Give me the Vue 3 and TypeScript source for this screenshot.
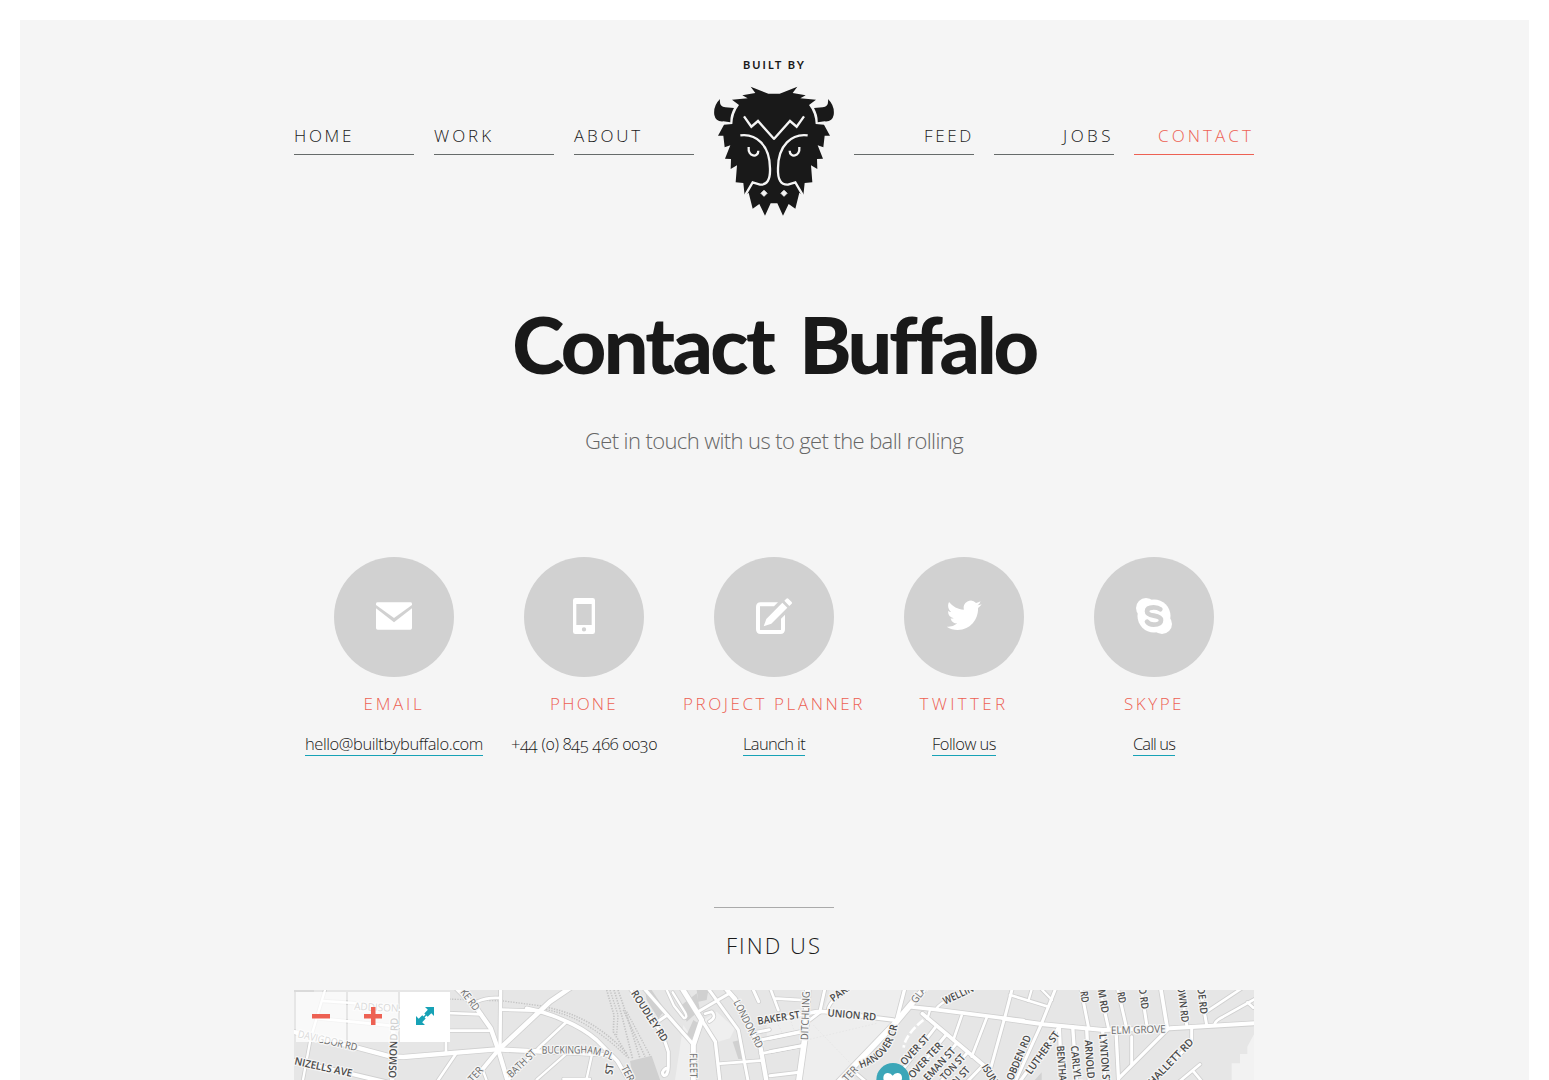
<script setup lang="ts">
import type { Directive } from 'vue'

interface NavItem { label: string; width: number; active?: boolean }
interface Contact { icon: string; title: string; titleWidth: number; text: string; textWidth: number; link: boolean }
interface Road { t: number; d: string; w: number }
interface Label { t: number; s: string; x: number; y: number; r: number; len: number; soft?: boolean }

// Tracks the text so that its advance width equals the given number of pixels.
const vFit: Directive<HTMLElement, number> = {
  mounted(el, { value }) {
    el.style.letterSpacing = '0px'
    const natural = el.getBoundingClientRect().width
    const count = (el.textContent ?? '').trim().length
    el.style.letterSpacing = `${(value - natural) / count}px`
  },
}

const leftNav: NavItem[] = [
  { label: 'HOME', width: 60 },
  { label: 'WORK', width: 60 },
  { label: 'ABOUT', width: 69 },
]
const rightNav: NavItem[] = [
  { label: 'FEED', width: 50 },
  { label: 'JOBS', width: 51 },
  { label: 'CONTACT', width: 96, active: true },
]

const contacts: Contact[] = [
  { icon: 'mail', title: 'EMAIL', titleWidth: 61, text: 'hello@builtbybuffalo.com', textWidth: 178, link: true },
  { icon: 'phone', title: 'PHONE', titleWidth: 68, text: '+44 (0) 845 466 0030', textWidth: 146, link: false },
  { icon: 'edit', title: 'PROJECT PLANNER', titleWidth: 182, text: 'Launch it', textWidth: 62, link: true },
  { icon: 'twitter', title: 'TWITTER', titleWidth: 89, text: 'Follow us', textWidth: 64, link: true },
  { icon: 'skype', title: 'SKYPE', titleWidth: 60, text: 'Call us', textWidth: 42, link: true },
]

// The map is split into four tiles; each entry is the left edge of a tile.
const tiles = [-12, 708, 1428, 2148]
const place = (t: number) => `translate(${tiles[t]} -15)`

const roads: Road[] = [
  { t: 0, d: 'M0 138 L210 190 L300 214 L340 216 L620 193 L760 200', w: 13 },
  { t: 0, d: 'M-10 222 L190 268 L290 292', w: 12 },
  { t: 0, d: 'M105 15 L62 160 L38 290', w: 7 },
  { t: 0, d: 'M98 48 L190 54 L330 75', w: 8 },
  { t: 0, d: 'M85 100 L330 125', w: 8 },
  { t: 0, d: 'M310 125 L306 290', w: 14 },
  { t: 0, d: 'M470 84 L575 88', w: 8 },
  { t: 0, d: 'M470 137 L600 137', w: 8 },
  { t: 0, d: 'M500 10 L560 70 L602 130 L625 195 L654 292', w: 13 },
  { t: 0, d: 'M632 10 L630 190', w: 10 },
  { t: 0, d: 'M632 74 L730 77', w: 8 },
  { t: 0, d: 'M562 50 Q590 36 632 39', w: 8 },
  { t: 0, d: 'M625 195 L780 50 L846 5', w: 14 },
  { t: 0, d: 'M625 195 L545 292', w: 12 },
  { t: 0, d: 'M468 165 V205', w: 8 },
  { t: 0, d: 'M497 208 L440 292', w: 8 },
  { t: 0, d: 'M580 260 L592 292', w: 7 },
  { t: 0, d: 'M650 290 L745 190 L830 110', w: 8 },
  { t: 1, d: 'M-10 70 Q50 82 100 105 Q160 130 200 165 L262 228 L300 292', w: 11 },
  { t: 1, d: 'M0 198 L235 210', w: 10 },
  { t: 1, d: 'M110 205 L20 284', w: 7 },
  { t: 1, d: 'M185 212 L168 290 M100 282 H180', w: 7 },
  { t: 1, d: 'M300 10 L398 150 L415 200 L415 245 Q414 272 402 272 Q390 262 408 250', w: 9 },
  { t: 1, d: 'M342 10 L412 90 L487 175', w: 10 },
  { t: 1, d: 'M380 112 L412 90', w: 9 },
  { t: 1, d: 'M408 10 L432 62 L462 100 Q474 98 465 82 L428 22', w: 7 },
  { t: 1, d: 'M455 8 L515 105 L490 180 L490 292', w: 15 },
  { t: 1, d: 'M515 105 L556 170 L570 292', w: 10 },
  { t: 1, d: 'M508 78 L600 24', w: 9 },
  { t: 1, d: 'M534 10 L625 135 L655 292', w: 9 },
  { t: 1, d: 'M585 8 L615 42 L692 190 L710 292', w: 13 },
  { t: 1, d: 'M570 236 L700 226 M692 206 L820 182', w: 8 },
  { t: 1, d: 'M692 165 L820 138 M680 142 L718 134', w: 9 },
  { t: 1, d: 'M668 10 L686 50', w: 9 },
  { t: 1, d: 'M720 8 L745 75 M732 40 L830 46', w: 8 },
  { t: 1, d: 'M525 86 L545 80 Q562 96 538 110', w: 8 },
  { t: 2, d: 'M114 8 L106 150 L86 292', w: 17 },
  { t: 2, d: 'M165 10 L150 78', w: 9 },
  { t: 2, d: 'M175 78 Q170 52 240 8', w: 8 },
  { t: 2, d: 'M0 160 L98 140 M0 200 L95 182 M0 272 L88 262', w: 9 },
  { t: 2, d: 'M-30 112 L140 80 L165 80 L370 105', w: 11 },
  { t: 2, d: 'M152 80 L110 112', w: 9 },
  { t: 2, d: 'M405 8 L380 105', w: 10 },
  { t: 2, d: 'M465 8 L375 115 L205 292', w: 17 },
  { t: 2, d: 'M425 66 L500 74 L760 107', w: 11 },
  { t: 2, d: 'M500 72 Q500 58 590 15', w: 8 },
  { t: 2, d: 'M480 75 L472 102', w: 7 },
  { t: 2, d: 'M457 86 L640 240 L680 292', w: 11 },
  { t: 2, d: 'M575 92 L550 165', w: 8 },
  { t: 2, d: 'M650 98 L605 215', w: 8 },
  { t: 2, d: 'M727 10 L705 95 L662 250', w: 9 },
  { t: 2, d: 'M500 122 L370 290 M528 150 L410 292 M560 175 L460 292 M592 203 L510 292 M640 240 L590 292', w: 9 },
  { t: 2, d: 'M250 258 L290 292', w: 8 },
  { t: 3, d: 'M-20 101 L100 118 L280 135 L480 130 L750 114', w: 12 },
  { t: 3, d: 'M0 30 L115 65', w: 8 },
  { t: 3, d: 'M138 8 L95 115 L15 292', w: 9 },
  { t: 3, d: 'M66 10 L55 48 M92 10 L126 45', w: 7 },
  { t: 3, d: 'M148 125 L28 292', w: 10 },
  { t: 3, d: 'M148 125 L155 292 M188 125 L200 292 M230 130 L238 292 M278 135 L285 292', w: 10 },
  { t: 3, d: 'M212 8 L236 130 M268 8 L296 132 M322 8 L350 130 M393 8 L412 130', w: 9 },
  { t: 3, d: 'M452 8 L472 130', w: 11 },
  { t: 3, d: 'M512 8 L530 120 M570 8 L590 120', w: 9 },
  { t: 3, d: 'M590 80 L695 10 M614 118 Q616 106 640 95 L745 36 M712 52 L730 68', w: 8 },
  { t: 3, d: 'M318 138 L326 292', w: 10 },
  { t: 3, d: 'M365 155 V238', w: 9 },
  { t: 3, d: 'M472 134 L326 280', w: 10 },
  { t: 3, d: 'M545 128 V172 L428 292', w: 9 },
  { t: 3, d: 'M570 238 L505 292 M548 256 L576 290', w: 8 },
]

const rails: Road[] = [
  { t: 0, d: 'M470 42 L560 45 L640 48 L765 64', w: 4 },
  { t: 1, d: 'M40 65 Q95 75 140 95 Q220 130 290 205', w: 5 },
  { t: 1, d: 'M40 72 Q95 82 140 104 Q220 145 290 215', w: 4 },
  { t: 1, d: 'M230 15 L252 90 L250 140 L298 222', w: 5 },
  { t: 1, d: 'M240 15 L264 90 L260 150', w: 4 },
  { t: 1, d: 'M252 15 L275 90 L308 222', w: 5 },
  { t: 1, d: 'M264 15 L290 90 L330 220', w: 5 },
  { t: 1, d: 'M280 75 L345 215', w: 5 },
  { t: 1, d: 'M290 80 L362 215', w: 4 },
]

const labels: Label[] = [
  { t: 0, s: 'ADDISON', x: 192, y: 74, r: 3, len: 133, soft: true },
  { t: 0, s: 'DAVIGDOR RD', x: 22, y: 157, r: 13, len: 182, soft: true },
  { t: 0, s: 'NIZELLS AVE', x: 12, y: 238, r: 12.5, len: 176 },
  { t: 0, s: 'OSMOND RD', x: 318, y: 280, r: -88, len: 182 },
  { t: 0, s: 'KE RD', x: 510, y: 22, r: 53, len: 72, soft: true },
  { t: 0, s: 'BATH ST', x: 664, y: 280, r: -44, len: 106, soft: true },
  { t: 0, s: 'TER', x: 548, y: 294, r: -48, len: 50, soft: true },
  { t: 1, s: 'ST', x: 247, y: 270, r: -82, len: 32 },
  { t: 1, s: 'TER', x: 272, y: 248, r: 62, len: 50, soft: true },
  { t: 1, s: 'ROUDLEY RD', x: 302, y: 25, r: 57, len: 176 },
  { t: 1, s: 'FLEET', x: 479, y: 205, r: 89, len: 74, soft: true },
  { t: 1, s: 'LONDON RD', x: 610, y: 52, r: 63, len: 157, soft: true },
  { t: 1, s: 'BAKER ST', x: 684, y: 119, r: -9, len: 128 },
  { t: 2, s: 'DITCHLING R', x: 114, y: 166, r: -88, len: 172, soft: true },
  { t: 2, s: 'PARK', x: 190, y: 52, r: -37, len: 74 },
  { t: 2, s: 'UNION RD', x: 172, y: 94, r: 5, len: 146 },
  { t: 2, s: 'GLA', x: 438, y: 57, r: -53, len: 54, soft: true },
  { t: 2, s: 'WELLIN', x: 525, y: 59, r: -25, len: 98 },
  { t: 2, s: 'TER', x: 232, y: 292, r: -48, len: 50, soft: true },
  { t: 2, s: 'OVER ST', x: 404, y: 243, r: -47, len: 112 },
  { t: 2, s: 'OVER TER', x: 428, y: 282, r: -47, len: 134 },
  { t: 2, s: 'EMAN ST', x: 474, y: 290, r: -47, len: 124 },
  { t: 2, s: 'TON ST', x: 524, y: 288, r: -47, len: 94 },
  { t: 2, s: 'N ST', x: 560, y: 302, r: -47, len: 62 },
  { t: 2, s: 'ISUN', x: 634, y: 246, r: 58, len: 62 },
  { t: 3, s: 'OBDEN RD', x: 8, y: 288, r: -67, len: 143 },
  { t: 3, s: 'LUTHER ST', x: 62, y: 270, r: -54, len: 150 },
  { t: 3, s: 'BENTHAM', x: 140, y: 183, r: 86, len: 130 },
  { t: 3, s: 'CARLYLE', x: 182, y: 183, r: 84, len: 118 },
  { t: 3, s: 'ARNOLD', x: 224, y: 166, r: 86, len: 116 },
  { t: 3, s: 'LYNTON ST', x: 268, y: 148, r: 86, len: 152 },
  { t: 3, s: 'RD', x: 211, y: 20, r: 82, len: 34 },
  { t: 3, s: 'M RD', x: 263, y: 15, r: 80, len: 72 },
  { t: 3, s: 'RD', x: 321, y: 23, r: 78, len: 34 },
  { t: 3, s: 'D RD', x: 386, y: 10, r: 82, len: 64 },
  { t: 3, s: 'OWN RD', x: 502, y: 4, r: 83, len: 110 },
  { t: 3, s: 'DE RD', x: 562, y: 9, r: 83, len: 80 },
  { t: 3, s: 'ELM GROVE', x: 303, y: 147, r: -1.5, len: 164, soft: true },
  { t: 3, s: 'HALLETT RD', x: 428, y: 302, r: -46, len: 180 },
]
</script>

<template>
  <div class="page">
    <header class="header">
      <nav class="nav">
        <a v-for="n in leftNav" :key="n.label" class="nav-item"><span v-fit="n.width">{{ n.label }}</span></a>
      </nav>
      <div class="brand">
        <div class="brand-text"><span v-fit="63">BUILT BY</span></div>
        <svg class="bison" viewBox="42 105 360 396" width="120" height="132">
          <path fill="#191919" d="M205 131L152 110L166 129L127 136L143 145L96 149L117 165Q99 188 97 222L72 224L54 257L70 257L74 292L91 286L75 326L93 327L92 357L111 346L107 397L130 399L134 437L146 428L158 476L178 462L195 497L212 460H232L249 497L266 462L286 476L298 428L310 437L314 399L337 397L333 346L352 357L351 327L369 326L353 286L370 292L374 257L390 257L372 224L347 222Q345 188 327 165L348 149L301 145L317 136L278 129L292 110L239 131Z" />
          <g v-for="m in [1, -1]" :key="m" :transform="m === 1 ? undefined : 'translate(444 0) scale(-1 1)'">
            <path fill="#191919" d="M60 147Q39 168 43 195Q47 216 70 214L91 217Q90 195 102 174L76 172Q57 170 60 147Z" />
            <g fill="none" stroke="#f5f5f5" stroke-width="7">
              <path d="M132 199L154 230L174 213L223 268" />
              <path d="M121 256C168 250 210 285 210 355Q212 406 180 404L158 397L133 440" />
              <path d="M146 291C143 322 175 324 175 302" />
            </g>
            <path fill="#f5f5f5" stroke="#f5f5f5" stroke-width="3" stroke-linejoin="round" d="M192 421L201 430L192 439L183 430Z" />
          </g>
        </svg>
      </div>
      <nav class="nav nav-right">
        <a v-for="n in rightNav" :key="n.label" class="nav-item" :class="{ active: n.active }"><span v-fit="n.width">{{ n.label }}</span></a>
      </nav>
    </header>

    <h1 class="title"><span v-fit="261">Contact</span><span v-fit="234">Buffalo</span></h1>
    <p class="subtitle"><span v-fit="378">Get in touch with us to get the ball rolling</span></p>

    <section class="contacts">
      <div v-for="c in contacts" :key="c.title" class="contact">
        <div class="disc">
          <svg viewBox="0 0 108 108" width="36" height="36" fill="#fff">
            <g v-if="c.icon === 'mail'">
              <path d="M0 21V17Q0 13 5 13H103Q108 13 108 17V21L54 60Z" />
              <path d="M0 31L54 73L108 31V90Q108 95 103 95H5Q0 95 0 90Z" />
            </g>
            <path v-else-if="c.icon === 'phone'" fill-rule="evenodd" d="M28 0H80Q87 0 87 7V101Q87 108 80 108H28Q21 108 21 101V7Q21 0 28 0ZM31 18V81H77V18ZM54 87.500A6.500 6.500 0 1 0 54 100.500A6.500 6.500 0 1 0 54 87.500Z" />
            <g v-else-if="c.icon === 'edit'">
              <path d="M66 13H14Q0 13 0 27V94Q0 108 14 108H73Q87 108 87 94V50L75 62V96H12V25H54Z" />
              <path d="M23 85L31 63L79 14L94 29L46 77Z" />
              <path d="M85 8L91 2Q94 -1 97 2L107 12Q109 15 107 17L100 24Z" />
            </g>
            <path v-else-if="c.icon === 'twitter'" transform="translate(2 -2) scale(4.370 4.500)" d="M23.953 4.570a10 10 0 01-2.825.775 4.958 4.958 0 002.163-2.723c-.951.555-2.005.959-3.127 1.184a4.920 4.920 0 00-8.384 4.482C7.690 8.095 4.067 6.130 1.640 3.162a4.822 4.822 0 00-.666 2.475c0 1.710.870 3.213 2.188 4.096a4.904 4.904 0 01-2.228-.616v.060a4.923 4.923 0 003.946 4.827 4.996 4.996 0 01-2.212.085 4.936 4.936 0 004.604 3.417 9.867 9.867 0 01-6.102 2.105c-.390 0-.779-.023-1.170-.067a13.995 13.995 0 007.557 2.209c9.053 0 13.998-7.496 13.998-13.985 0-.210 0-.420-.015-.630A9.935 9.935 0 0024 4.590z" />
            <g v-else>
              <circle cx="30" cy="30" r="30" />
              <circle cx="54" cy="54" r="49.500" />
              <circle cx="78" cy="78" r="30" />
              <path fill="none" stroke="#d1d1d1" stroke-width="14" stroke-linecap="round" d="M73 34Q66 28 53 28Q33 28 33 40Q33 50 53 53Q75 56 75 67Q75 80 53 80Q39 80 33 71" />
            </g>
          </svg>
        </div>
        <h2 class="contact-title"><span v-fit="c.titleWidth">{{ c.title }}</span></h2>
        <p class="contact-text"><span v-fit="c.textWidth" :class="{ link: c.link }">{{ c.text }}</span></p>
      </div>
    </section>

    <h3 class="find"><span v-fit="96">FIND US</span></h3>

    <section class="map">
      <svg viewBox="0 0 2880 270" width="960" height="90" class="map-art">
        <rect width="2880" height="270" fill="#e6e6e6" />
        <g :transform="place(1)">
          <path fill="#efefef" d="M460 120L495 170L480 285H435Z M520 105L560 80L615 130L600 160L560 172Z" />
          <path fill="#d0d0d0" d="M300 228L365 212L392 290H312Z M345 15L365 15L405 75L385 100L350 45Z M455 60L500 25L510 75L470 110Z M490 105L505 115L485 165L470 150Z M500 15H535L530 45L505 50Z M608 170L630 165L648 222H625Z" />
        </g>
        <g :transform="place(2)">
          <path fill="#eeeeee" d="M118 100L160 85L370 108L230 255L262 290H90Z M180 15H400L380 100L160 78Z M-10 115L100 90L95 140L-10 165Z" />
          <path fill="none" stroke="#e2e2e2" stroke-width="2" stroke-dasharray="5 5" d="M110 165L320 115M130 120L260 255M20 110L40 150M60 100L75 145" />
        </g>
        <path :transform="place(0)" fill="#dadada" d="M12 15H72V21H12Z" />
        <path :transform="place(3)" fill="#d2d2d2" d="M70 290L95 262V290Z" />
        <path v-for="(r, i) in rails" :key="'rail' + i" :d="r.d" :transform="place(r.t)" :stroke-width="r.w" fill="none" stroke="#c4c4c4" stroke-dasharray="4 4" />
        <path v-for="(r, i) in roads" :key="'edge' + i" :d="r.d" :transform="place(r.t)" :stroke-width="r.w + 5" fill="none" stroke="#d0d0d0" stroke-linejoin="round" stroke-linecap="round" />
        <path v-for="(r, i) in roads" :key="'road' + i" :d="r.d" :transform="place(r.t)" :stroke-width="r.w" fill="none" stroke="#fff" stroke-linejoin="round" stroke-linecap="round" />
        <path :transform="place(2)" fill="none" stroke="#fff" stroke-width="8" stroke-dasharray="24 8" d="M460 105Q405 150 401 188" />
        <path :transform="place(3)" fill="#f2f2f2" d="M732 148L712 185V207H690V235H665V290H735Z" />
        <g class="labels">
          <text v-for="(l, i) in labels" :key="'label' + i" :transform="`${place(l.t)} translate(${l.x} ${l.y}) rotate(${l.r})`" :textLength="l.len" lengthAdjust="spacingAndGlyphs" :class="{ soft: l.soft }">{{ l.s }}</text>
          <g :transform="place(1)">
            <path id="buckingham" fill="none" stroke="none" d="M35 206L165 205Q205 205 262 234" />
            <text class="soft" textLength="214" lengthAdjust="spacingAndGlyphs"><textPath href="#buckingham">BUCKINGHAM PL</textPath></text>
          </g>
          <g :transform="place(2)">
            <path id="hanover" fill="none" stroke="none" d="M272 250Q372 218 385 105" />
            <text textLength="180" lengthAdjust="spacingAndGlyphs"><textPath href="#hanover">HANOVER CR</textPath></text>
          </g>
        </g>
        <g :transform="place(2)">
          <circle cx="369" cy="284" r="50" fill="#3ba6b8" />
          <path fill="#fff" d="M368 272Q362 263 352 264Q340 266 340 279Q340 294 368 312Q396 294 396 279Q396 266 384 264Q374 263 368 272Z" />
        </g>
      </svg>
      <div class="controls">
        <button class="control faded" aria-label="Zoom out">
          <svg width="18" height="18"><path d="M0 7H18V11.500H0Z" fill="#ed6153" /></svg>
        </button>
        <button class="control faded" aria-label="Zoom in">
          <svg width="18" height="18"><path d="M0 7H7V0H11.500V7H18V11.500H11.500V18H7V11.500H0Z" fill="#ed6153" /></svg>
        </button>
        <button class="control" aria-label="Full screen">
          <svg width="18" height="18" fill="#17a2b6"><path d="M9 0H18V9L15.300 6.300L11.700 9.800L8.300 6.400L11.800 2.800ZM0 9L2.700 11.700L6.300 8.200L9.700 11.600L6.200 15.200L9 18H0Z" /><path d="M6.500 10.500L10.500 6.500L11.500 7.500L7.500 11.500Z" /></svg>
        </button>
      </div>
    </section>
  </div>
</template>

<style>
body {
  margin: 0;
  background: #fff;
}
</style>

<style scoped>
.page {
  box-sizing: border-box;
  height: 1080px;
  overflow: hidden;
  border: 20px solid #fff;
  border-bottom: 0;
  padding-right: 1px;
  background: #f5f5f5;
  color: #191919;
  font-family: 'Open Sans', 'Noto Sans', sans-serif;
  font-weight: 300;
}
.page span {
  display: inline-block;
  white-space: nowrap;
}
.header {
  display: flex;
  gap: 20px;
  width: 960px;
  height: 220px;
  margin: 0 auto;
}
.nav {
  display: flex;
  gap: 20px;
}
.nav-item {
  width: 120px;
  height: 30px;
  margin-top: 104px;
  border-bottom: 1px solid #666b6a;
  font-size: 17px;
  line-height: 24px;
}
.nav-right .nav-item {
  text-align: right;
}
.nav-item.active {
  border-color: #ed6153;
  color: #ed6153;
}
.brand {
  width: 120px;
  text-align: center;
}
.brand-text {
  height: 65px;
  padding: 38px 0 0 1px;
  box-sizing: border-box;
  font: 700 11px/14px Lato, sans-serif;
}
.bison {
  display: block;
}
.title {
  display: flex;
  justify-content: center;
  gap: 26px;
  margin: 56px 0 0;
  font: 900 79px/96px Lato, sans-serif;
}
.subtitle {
  margin: 33px 0 0;
  text-align: center;
  font-size: 22px;
  line-height: 30px;
  color: #666;
}
.contacts {
  display: flex;
  justify-content: center;
  width: 960px;
  margin: 102px auto 0;
}
.contact {
  display: flex;
  flex-direction: column;
  align-items: center;
  width: 190px;
}
.disc {
  display: flex;
  align-items: center;
  justify-content: center;
  box-sizing: border-box;
  width: 120px;
  height: 120px;
  padding-bottom: 2px;
  border-radius: 50%;
  background: #d1d1d1;
}
.contact-title {
  margin: 15px 0 0;
  font-size: 17px;
  font-weight: 300;
  line-height: 24px;
  color: #ed6153;
}
.contact-text {
  margin: 16px 0 0;
  font-size: 16.5px;
  line-height: 23px;
  font-feature-settings: 'onum';
}
.link {
  border-bottom: 1px solid #17a2b6;
}
.find {
  width: 120px;
  height: 82px;
  margin: 151px auto 0;
  border-top: 1px solid #aaa;
  text-align: center;
  font-size: 22px;
  font-weight: 300;
  line-height: 75px;
}
.map {
  position: relative;
  width: 960px;
  height: 90px;
  margin: 0 auto;
}
.map-art {
  display: block;
}
.labels {
  font-family: 'Open Sans', 'Noto Sans', sans-serif;
  font-size: 31px;
  font-weight: 600;
  fill: #484848;
  stroke: #f4f4f4;
  stroke-width: 8px;
  stroke-linejoin: round;
  paint-order: stroke;
}
.soft {
  font-weight: 500;
  fill: #686868;
}
.controls {
  position: absolute;
  top: 2px;
  left: 2px;
  display: flex;
  gap: 2px;
}
.control {
  display: flex;
  align-items: center;
  justify-content: center;
  width: 50px;
  height: 50px;
  padding: 0 0 2px;
  border: 0;
  background: #fff;
}
.control.faded {
  background: rgba(255, 255, 255, 0.75);
}
</style>
